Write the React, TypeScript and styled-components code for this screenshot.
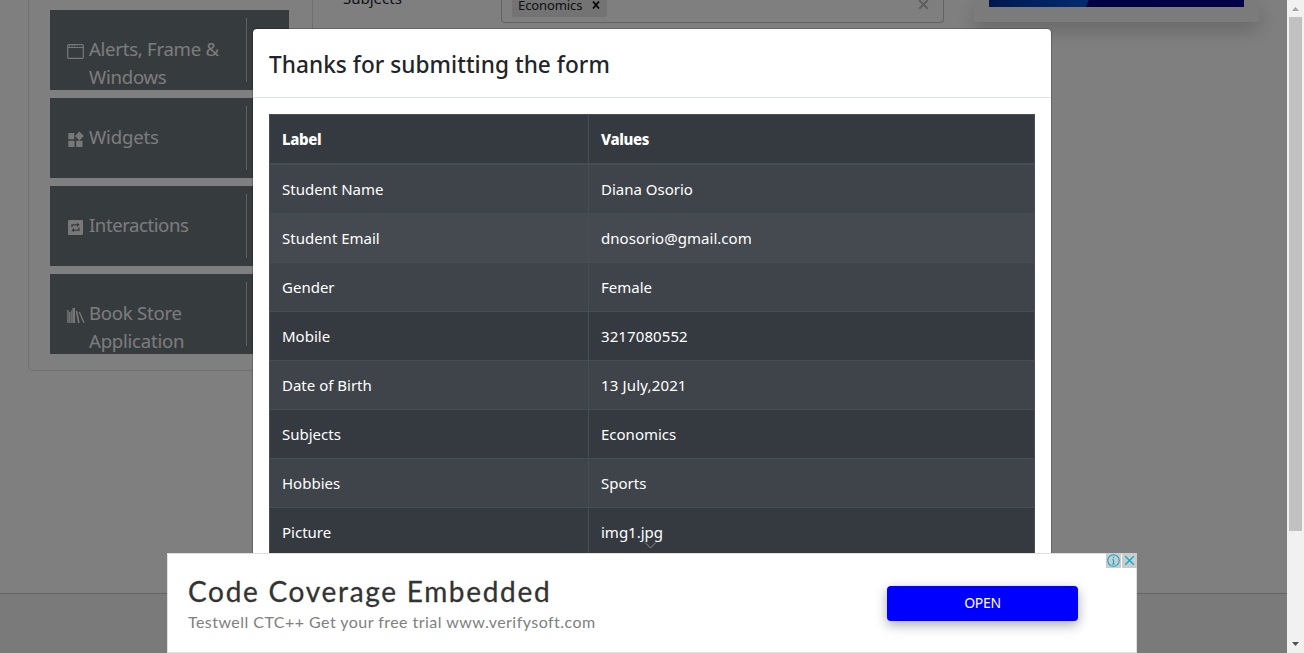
import React from "react";
import styled, { createGlobalStyle } from "styled-components";

const GlobalStyle = createGlobalStyle`
  * { box-sizing: border-box; }
  html, body { margin: 0; padding: 0; overflow: hidden; }
  body { font-family: "Noto Sans", "Open Sans", sans-serif; color: #212529; }
`;

const Screen = styled.div`
  display: flex;
  position: relative;
  width: 1304px;
  height: 653px;
  overflow: hidden;
  background: #fff;
`;

const Page = styled.main`
  display: flex;
  flex-direction: column;
  width: 1287px;
  height: 653px;
`;

const Columns = styled.div`
  display: flex;
  align-items: flex-start;
  height: 593px;
  padding-left: 28px;
`;

const Sidebar = styled.nav`
  display: flex;
  flex-direction: column;
  gap: 8px;
  width: 285px;
  height: 371px;
  padding: 10px 0 0 21px;
  border: 1px solid #dfdfdf;
  border-top: 0;
  border-radius: 0 0 5px 5px;
`;

const MenuButton = styled.div`
  display: flex;
  width: 239px;
  height: 80px;
  padding: 8px 42px 0 17px;
  background: linear-gradient(90deg, #6c767c 0 196px, #c0c0c0 196px 197px, #6c767c 197px) 0 8px / 100% 64px no-repeat #6c767c;
  color: #fff;
  overflow: hidden;
`;

const MenuIcon = styled.svg`
  flex: none;
  width: 18px;
  height: 18px;
  margin: 24px 4px 0 0;
`;

const MenuLabel = styled.span<{ $spacing: number }>`
  padding-top: 17px;
  font-size: 18.6px;
  line-height: 28px;
  letter-spacing: ${(p) => p.$spacing}px;
  white-space: pre-line;
  color: #f8f8f8;
`;

const FormArea = styled.section`
  display: flex;
  width: 660px;
  padding-left: 30px;
`;

const FieldLabel = styled.span`
  width: 158px;
  margin-top: -14px;
  font-size: 15px;
  line-height: 24px;
`;

const SelectBox = styled.div`
  display: flex;
  justify-content: space-between;
  width: 443px;
  height: 22.5px;
  padding: 0 14px 0 10px;
  border: 1px solid #c4c4c4;
  border-top: 0;
  border-radius: 0 0 4px 4px;
`;

const Chip = styled.span`
  display: flex;
  align-items: center;
  gap: 10px;
  height: 17px;
  padding: 0 7px 7px 6px;
  border-radius: 0 0 2px 2px;
  background: #e6e6e6;
  font-size: 13px;
  line-height: 18px;
  letter-spacing: -0.1px;
`;

const ClearIcon = styled.svg`
  width: 11px;
  height: 11px;
  margin-top: -1px;
`;

const PromoCard = styled.aside`
  width: 285px;
  height: 22px;
  margin-left: 1px;
  padding: 0 15px 15px;
  background: #f6f6f6;
  box-shadow: 0 8px 20px rgba(0, 0, 0, 0.2);
`;

const PromoImage = styled.div`
  height: 7px;
  background: linear-gradient(115deg, #0030a0 0, #0058e0 90px, #000088 91px, #000090 100%);
`;

const Footer = styled.footer`
  height: 60px;
  border-top: 1px solid #ccc;
  background: #f5f5f5;
`;

const Backdrop = styled.div`
  position: absolute;
  inset: 0 17px 0 0;
  background: rgba(0, 0, 0, 0.5);
`;

const Scrollbar = styled.div`
  display: flex;
  flex-direction: column;
  align-items: center;
  width: 17px;
  height: 653px;
  background: #f1f1f1;
`;

const ScrollArrow = styled.svg`
  width: 17px;
  height: 17px;
`;

const ScrollThumb = styled.div`
  width: 13px;
  height: 514px;
  margin-bottom: 105px;
  background: #c1c1c1;
`;

const Modal = styled.section`
  position: absolute;
  top: 28px;
  left: 252px;
  width: 800px;
  height: 640px;
  border: 1px solid rgba(0, 0, 0, 0.2);
  border-radius: 5px;
  background: #fff;
  background-clip: padding-box;
`;

const ModalHeader = styled.header`
  height: 69px;
  padding: 16px;
  border-bottom: 1px solid #dee2e6;
`;

const ModalTitle = styled.h4`
  margin: 0;
  font-size: 22.6px;
  font-weight: 500;
  line-height: 40px;
  height: 36px;
  letter-spacing: 0.05px;
`;

const ModalBody = styled.div`
  padding: 16px;
`;

const Table = styled.div`
  border: 1px solid #454d55;
  color: #fff;
  font-size: 15px;
`;

const tones = { dark: "#353a41", striped: "#3f444a", hover: "#454a50" };

const Row = styled.div<{ $tone: keyof typeof tones; $head?: boolean }>`
  display: grid;
  grid-template-columns: 319px 1fr;
  height: ${(p) => (p.$head ? 50 : 49)}px;
  border-bottom: ${(p) => (p.$head ? 2 : 1)}px solid #454d55;
  background: ${(p) => tones[p.$tone]};
  font-weight: ${(p) => (p.$head ? 800 : 430)};
`;

const Cell = styled.span<{ $spacing?: number }>`
  padding: 12px;
  line-height: 25px;
  letter-spacing: ${(p) => p.$spacing ?? 0}px;
  &:first-child { border-right: 1px solid #454d55; }
`;

const Chevron = styled.svg`
  position: absolute;
  left: 644px;
  top: 541px;
  width: 13px;
  height: 9px;
`;

const Ad = styled.section`
  position: absolute;
  left: 167px;
  top: 553px;
  display: flex;
  justify-content: space-between;
  width: 970px;
  height: 100px;
  padding: 18px 58px 0 19px;
  border: 1px solid #e0e0e0;
  background: #fff;
`;

const AdText = styled.div`
  display: flex;
  flex-direction: column;
  padding-left: 1px;
  font-family: Lato, sans-serif;
  white-space: nowrap;
`;

const AdTitle = styled.span`
  font-size: 28px;
  line-height: 38px;
  letter-spacing: 1.7px;
  color: #333;
  -webkit-text-stroke: 0.3px #333;
`;

const AdSubtitle = styled.span`
  font-size: 16px;
  line-height: 24px;
  letter-spacing: 0.46px;
  color: #808080;
`;

const AdButton = styled.div`
  width: 191px;
  height: 35px;
  margin-top: 14px;
  border-radius: 4px;
  background: #0000ff;
  box-shadow: 0 4px 12px rgba(20, 25, 50, 0.36);
  color: #fff;
  font-size: 14px;
  font-weight: 450;
  line-height: 34px;
  letter-spacing: -0.3px;
  text-align: center;
`;

const AdControls = styled.div`
  position: absolute;
  top: -1px;
  right: -1px;
  display: flex;
  gap: 1px;
`;

const AdControl = styled.svg`
  display: block;
  width: 15px;
  height: 15px;
  background: #cdcccc;
`;

const WindowIcon = () => (
  <MenuIcon viewBox="0 0 18 18" fill="none" stroke="#f0f0f0">
    <rect x=".7" y="2.7" width="15.6" height="13.6" rx="1" strokeWidth="1.2" />
    <path d="M1 5.5h15.5" />
    <path d="M2 4h1.2M4.5 4h1.2M7 4h1.2" />
  </MenuIcon>
);

const WidgetsIcon = () => (
  <MenuIcon viewBox="0 0 18 18" fill="#f0f0f0">
    <path d="M1.3 3h6v6.2h-6zM1.3 10.7h6.2v6.3H1.3zM9.2 10.7h6.3v6.3H9.2zM12.4 1.6l4.4 4.4-4.4 4.4L8 6z" />
  </MenuIcon>
);

const InteractionsIcon = () => (
  <MenuIcon viewBox="0 0 18 18">
    <rect x="1" y="2" width="15" height="15" rx="1" fill="#f0f0f0" />
    <g stroke="#6c767c" fill="none" strokeWidth="1.2">
      <path d="M5 9.2V6.8h5.6M12 9.6v2.6H6.4" />
    </g>
    <path d="M10 4.7l2.6 2.1L10 8.9zM7 10.1l-2.6 2.1L7 14.3z" fill="#6c767c" />
  </MenuIcon>
);

const BooksIcon = () => (
  <MenuIcon viewBox="0 0 18 18" stroke="#f0f0f0" fill="none">
    <path d="M.9 4v13M2.8 6V17" strokeWidth="1.4" />
    <path d="M6.7 2v15" strokeWidth="2.6" />
    <path d="M4.6 4.5v12.5" strokeWidth=".9" />
    <path d="M9.5 5l2.3 12" strokeWidth="1.6" />
    <path d="M12.3 6l4.7 10.8" strokeWidth="1.3" />
  </MenuIcon>
);

const menu = [
  { label: "Alerts, Frame &\nWindows", Icon: WindowIcon, spacing: -0.28 },
  { label: "Widgets", Icon: WidgetsIcon, spacing: -0.2 },
  { label: "Interactions", Icon: InteractionsIcon, spacing: -0.45 },
  { label: "Book Store\nApplication", Icon: BooksIcon, spacing: -0.25 },
];

const rows: { label: string; value: string; tone: keyof typeof tones; spacing?: number }[] = [
  { label: "Student Name", value: "Diana Osorio", tone: "striped" },
  { label: "Student Email", value: "dnosorio@gmail.com", tone: "hover", spacing: 0.03 },
  { label: "Gender", value: "Female", tone: "striped" },
  { label: "Mobile", value: "3217080552", tone: "dark", spacing: 0.1 },
  { label: "Date of Birth", value: "13 July,2021", tone: "striped", spacing: 0.16 },
  { label: "Subjects", value: "Economics", tone: "dark" },
  { label: "Hobbies", value: "Sports", tone: "striped" },
  { label: "Picture", value: "img1.jpg", tone: "dark" },
];

export default function App() {
  return (
    <Screen>
      <GlobalStyle />
      <Page>
        <Columns>
          <Sidebar>
            {menu.map(({ label, Icon, spacing }) => (
              <MenuButton key={label}>
                <Icon />
                <MenuLabel $spacing={spacing}>{label}</MenuLabel>
              </MenuButton>
            ))}
          </Sidebar>
          <FormArea>
            <FieldLabel>Subjects</FieldLabel>
            <SelectBox>
              <Chip>
                Economics
                <svg width="8" height="8" viewBox="0 0 8 8" stroke="#111" strokeWidth="1.8">
                  <path d="M1 0.5l6 7M7 0.5l-6 7" />
                </svg>
              </Chip>
              <ClearIcon viewBox="0 0 11 11" stroke="#bbb" strokeWidth="2">
                <path d="M1.2 1.2l8.6 8.6M9.8 1.2L1.2 9.8" />
              </ClearIcon>
            </SelectBox>
          </FormArea>
          <PromoCard>
            <PromoImage />
          </PromoCard>
        </Columns>
        <Footer />
      </Page>
      <Scrollbar>
        <ScrollArrow viewBox="0 0 17 17" fill="#a3a3a3">
          <path d="M5 11h7L8.5 7z" />
        </ScrollArrow>
        <ScrollThumb />
        <ScrollArrow viewBox="0 0 17 17" fill="#505050">
          <path d="M5 6h7L8.5 10z" />
        </ScrollArrow>
      </Scrollbar>
      <Backdrop />
      <Modal>
        <ModalHeader>
          <ModalTitle>Thanks for submitting the form</ModalTitle>
        </ModalHeader>
        <ModalBody>
          <Table>
            <Row $tone="dark" $head>
              <Cell $spacing={-0.35}>Label</Cell>
              <Cell $spacing={-0.35}>Values</Cell>
            </Row>
            {rows.map((r) => (
              <Row key={r.label} $tone={r.tone}>
                <Cell>{r.label}</Cell>
                <Cell $spacing={r.spacing}>{r.value}</Cell>
              </Row>
            ))}
          </Table>
        </ModalBody>
      </Modal>
      <Chevron viewBox="0 0 13 9" fill="none" stroke="#8b8e92">
        <path d="M1 1.5l5.5 5.5L12 1.5" />
      </Chevron>
      <Ad>
        <AdText>
          <AdTitle>Code Coverage Embedded</AdTitle>
          <AdSubtitle>Testwell CTC++ Get your free trial www.verifysoft.com</AdSubtitle>
        </AdText>
        <AdButton>OPEN</AdButton>
        <AdControls>
          <AdControl viewBox="0 0 15 15" fill="none" stroke="#00aecd" strokeWidth="1.1">
            <circle cx="7.5" cy="7.5" r="5.7" />
            <path d="M7.5 6.5v4.5M7.5 3.7v1.5M6.3 6.7h1.2M6.2 11h2.6" />
          </AdControl>
          <AdControl viewBox="0 0 15 15" fill="none" stroke="#00aecd" strokeWidth="1.3">
            <path d="M3.2 3.2l8.6 8.6M11.8 3.2l-8.6 8.6" />
          </AdControl>
        </AdControls>
      </Ad>
    </Screen>
  );
}
